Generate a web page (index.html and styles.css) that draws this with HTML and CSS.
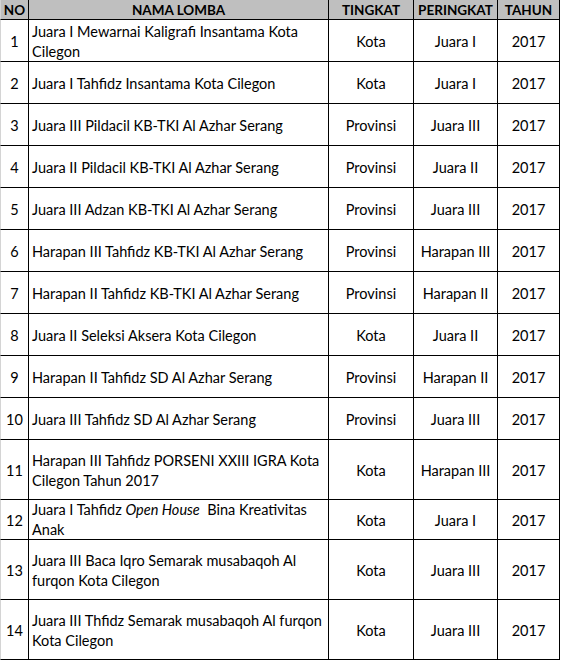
FILE: index.html
```html
<!DOCTYPE html>
<html>
<head>
<meta charset="utf-8">
<link rel="stylesheet" href="styles.css">
</head>
<body>
<div class="tbl">
  <div class="c h no">NO</div><div class="c h">NAMA LOMBA</div><div class="c h">TINGKAT</div><div class="c h">PERINGKAT</div><div class="c h">TAHUN</div>

  <div class="c no">1</div><div class="c name"><span>Juara I Mewarnai Kaligrafi Insantama Kota<br>Cilegon</span></div><div class="c">Kota</div><div class="c">Juara I</div><div class="c">2017</div>
  <div class="c no">2</div><div class="c name"><span>Juara I Tahfidz Insantama Kota Cilegon</span></div><div class="c">Kota</div><div class="c">Juara I</div><div class="c">2017</div>
  <div class="c no">3</div><div class="c name"><span>Juara III Pildacil KB-TKI Al Azhar Serang</span></div><div class="c">Provinsi</div><div class="c">Juara III</div><div class="c">2017</div>
  <div class="c no">4</div><div class="c name"><span>Juara II Pildacil KB-TKI Al Azhar Serang</span></div><div class="c">Provinsi</div><div class="c">Juara II</div><div class="c">2017</div>
  <div class="c no">5</div><div class="c name"><span>Juara III Adzan KB-TKI Al Azhar Serang</span></div><div class="c">Provinsi</div><div class="c">Juara III</div><div class="c">2017</div>
  <div class="c no">6</div><div class="c name"><span>Harapan III Tahfidz KB-TKI Al Azhar Serang</span></div><div class="c">Provinsi</div><div class="c">Harapan III</div><div class="c">2017</div>
  <div class="c no">7</div><div class="c name"><span>Harapan II Tahfidz KB-TKI Al Azhar Serang</span></div><div class="c">Provinsi</div><div class="c">Harapan II</div><div class="c">2017</div>
  <div class="c no">8</div><div class="c name"><span>Juara II Seleksi Aksera Kota Cilegon</span></div><div class="c">Kota</div><div class="c">Juara II</div><div class="c">2017</div>
  <div class="c no">9</div><div class="c name"><span>Harapan II Tahfidz SD Al Azhar Serang</span></div><div class="c">Provinsi</div><div class="c">Harapan II</div><div class="c">2017</div>
  <div class="c no">10</div><div class="c name"><span>Juara III Tahfidz SD Al Azhar Serang</span></div><div class="c">Provinsi</div><div class="c">Juara III</div><div class="c">2017</div>
  <div class="c no">11</div><div class="c name"><span>Harapan III Tahfidz PORSENI XXIII IGRA Kota<br>Cilegon Tahun 2017</span></div><div class="c">Kota</div><div class="c">Harapan III</div><div class="c">2017</div>
  <div class="c no">12</div><div class="c name top"><span>Juara I Tahfidz <i>Open House</i>&nbsp; Bina Kreativitas<br>Anak</span></div><div class="c">Kota</div><div class="c">Juara I</div><div class="c">2017</div>
  <div class="c no">13</div><div class="c name"><span>Juara III Baca Iqro Semarak musabaqoh Al<br>furqon Kota Cilegon</span></div><div class="c">Kota</div><div class="c">Juara III</div><div class="c">2017</div>
  <div class="c no">14</div><div class="c name"><span>Juara III Thfidz Semarak musabaqoh Al furqon<br>Kota Cilegon</span></div><div class="c">Kota</div><div class="c">Juara III</div><div class="c">2017</div>
</div>
</body>
</html>
```

FILE: styles.css
```css
html, body {
  margin: 0;
  padding: 0;
  background: #fff;
}
.tbl {
  display: grid;
  grid-template-columns: 29px 300px 85px 84px 62px;
  grid-template-rows: 20px repeat(10, 42px) 60px 40px 60px 60px;
  font-family: Lato, "Open Sans", sans-serif;
  font-size: 14.5px;
  color: #000;
}
.c {
  box-sizing: border-box;
  border-right: 1px solid #000;
  border-bottom: 1px solid #000;
  display: flex;
  align-items: center;
  justify-content: center;
  text-align: center;
  line-height: 20px;
  padding-top: 2px;
  white-space: nowrap;
  overflow: hidden;
}
.no {
  border-left: 1px solid #d4d4d4;
}
.h {
  background: #bfbfbf;
  font-weight: bold;
  font-size: 13.5px;
  padding-top: 1px;
}
.name {
  justify-content: flex-start;
  text-align: left;
  padding-left: 3px;
}
.top {
  align-items: flex-start;
  padding-top: 0;
}
```
